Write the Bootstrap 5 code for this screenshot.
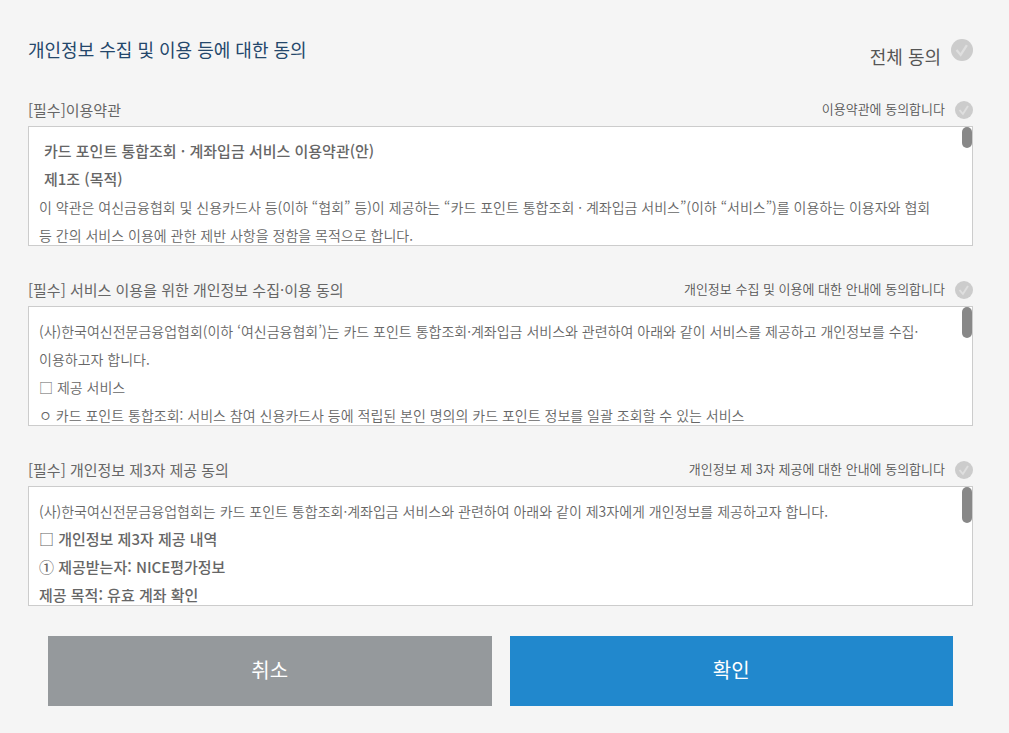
<!DOCTYPE html>
<html lang="ko">
<head>
<meta charset="utf-8">
<meta name="viewport" content="width=device-width, initial-scale=1">
<title>개인정보 수집 및 이용 등에 대한 동의</title>
<link href="https://cdn.jsdelivr.net/npm/bootstrap@5.3.0/dist/css/bootstrap.min.css" rel="stylesheet">
<style>
body { background: #f5f5f5; color: #666; font-family: "Noto Sans CJK KR", sans-serif; font-size: 14px; line-height: 28px; word-break: keep-all; }
.consent-page { padding: 28px 36px 27px 28px; }
.page-head { margin-bottom: 26px; }
.page-title { color: #24476b; font-size: 18px; line-height: 42px; font-weight: 400; }
.all-label { color: #555; font-size: 18px; line-height: 28px; padding-top: 14px; }
.section-head { padding-bottom: 2px; }
.section-title { font-size: 15px; line-height: 28px; font-weight: 400; }
.agree-label { color: #555; font-size: 13px; line-height: 26px; padding-bottom: 2px; font-weight: 350; }
.check-pair { gap: 10px; }
.consent-section { margin-bottom: 30px; }
.round-check { appearance: none; flex: none; width: 18px; height: 18px; margin: 0; border-radius: 50%; cursor: pointer;
  background: #ccc url("data:image/svg+xml,%3Csvg xmlns='http://www.w3.org/2000/svg' viewBox='0 0 18 18'%3E%3Cpath d='M4.5 9l3.4 4L13 5' fill='none' stroke='%23dfdfdf' stroke-width='1.9'/%3E%3C/svg%3E") center / 100% 100% no-repeat; }
.round-check:checked { background-color: #2188cd; }
.round-check.check-all { width: 22px; height: 22px; margin-top: 11px; }
.terms-box { background: #fff; border: 1px solid #ccc; height: 120px; }
.terms-text { height: 100%; padding: 10px 34px 0 10px; overflow-y: auto; scrollbar-width: none; font-weight: 350; }
.terms-text::-webkit-scrollbar { display: none; }
.terms-text p { margin: 0; }
.terms-text .clause { font-size: 15px; font-weight: 500; }
.terms-text .clause-title { line-height: 28px; padding-left: 5px; }
.scroll-thumb { position: absolute; top: 0; right: 0; width: 10px; height: 21px; border-radius: 5px; background: #888; }
.thumb-mid { height: 31px; }
.thumb-long { height: 36px; }
.action-row { padding: 0 20px; gap: 18px; }
.btn-consent, .btn-consent:hover { border: 0; border-radius: 0; color: #fff; font-size: 20px; line-height: 30px; padding: 19px 12px 21px; }
.btn-cancel, .btn-cancel:hover { background: #95999c; }
.btn-ok, .btn-ok:hover { background: #2188cd; }
</style>
</head>
<body>
<form class="consent-page">
  <header class="page-head d-flex justify-content-between align-items-start">
    <h1 class="page-title mb-0">개인정보 수집 및 이용 등에 대한 동의</h1>
    <div class="d-flex align-items-start check-pair">
      <label class="all-label" for="agree-all">전체 동의</label>
      <input class="round-check check-all" type="checkbox" id="agree-all">
    </div>
  </header>

  <section class="consent-section">
    <div class="section-head d-flex justify-content-between align-items-center">
      <h2 class="section-title mb-0">[필수]이용약관</h2>
      <div class="d-flex align-items-center check-pair">
        <label class="agree-label" for="agree-terms">이용약관에 동의합니다</label>
        <input class="round-check" type="checkbox" id="agree-terms">
      </div>
    </div>
    <div class="terms-box position-relative">
      <div class="terms-text" tabindex="0">
        <p class="clause clause-title">카드 포인트 통합조회 · 계좌입금 서비스 이용약관(안)</p>
        <p class="clause clause-title">제1조 (목적)</p>
        <p>이 약관은 여신금융협회 및 신용카드사 등(이하 “협회” 등)이 제공하는 “카드 포인트 통합조회 · 계좌입금 서비스”(이하 “서비스”)를 이용하는 이용자와 협회 등 간의 서비스 이용에 관한 제반 사항을 정함을 목적으로 합니다.</p>
      </div>
      <span class="scroll-thumb"></span>
    </div>
  </section>

  <section class="consent-section">
    <div class="section-head d-flex justify-content-between align-items-center">
      <h2 class="section-title mb-0">[필수] 서비스 이용을 위한 개인정보 수집·이용 동의</h2>
      <div class="d-flex align-items-center check-pair">
        <label class="agree-label" for="agree-privacy">개인정보 수집 및 이용에 대한 안내에 동의합니다</label>
        <input class="round-check" type="checkbox" id="agree-privacy">
      </div>
    </div>
    <div class="terms-box position-relative">
      <div class="terms-text" tabindex="0">
        <p>(사)한국여신전문금융업협회(이하 ‘여신금융협회’)는 카드 포인트 통합조회·계좌입금 서비스와 관련하여 아래와 같이 서비스를 제공하고 개인정보를 수집·<wbr>이용하고자 합니다.</p>
        <p>□ 제공 서비스</p>
        <p>ㅇ 카드 포인트 통합조회: 서비스 참여 신용카드사 등에 적립된 본인 명의의 카드 포인트 정보를 일괄 조회할 수 있는 서비스</p>
      </div>
      <span class="scroll-thumb thumb-mid"></span>
    </div>
  </section>

  <section class="consent-section">
    <div class="section-head d-flex justify-content-between align-items-center">
      <h2 class="section-title mb-0">[필수] 개인정보 제3자 제공 동의</h2>
      <div class="d-flex align-items-center check-pair">
        <label class="agree-label" for="agree-third">개인정보 제 3자 제공에 대한 안내에 동의합니다</label>
        <input class="round-check" type="checkbox" id="agree-third">
      </div>
    </div>
    <div class="terms-box position-relative">
      <div class="terms-text" tabindex="0">
        <p>(사)한국여신전문금융업협회는 카드 포인트 통합조회·계좌입금 서비스와 관련하여 아래와 같이 제3자에게 개인정보를 제공하고자 합니다.</p>
        <p class="clause">□ 개인정보 제3자 제공 내역</p>
        <p class="clause">① 제공받는자: NICE평가정보</p>
        <p class="clause">제공 목적: 유효 계좌 확인</p>
      </div>
      <span class="scroll-thumb thumb-long"></span>
    </div>
  </section>

  <div class="action-row d-flex">
    <button type="button" class="btn btn-consent btn-cancel flex-fill w-50">취소</button>
    <button type="submit" class="btn btn-consent btn-ok flex-fill w-50">확인</button>
  </div>
</form>
<script src="https://cdn.jsdelivr.net/npm/bootstrap@5.3.0/dist/js/bootstrap.bundle.min.js"></script>
</body>
</html>
